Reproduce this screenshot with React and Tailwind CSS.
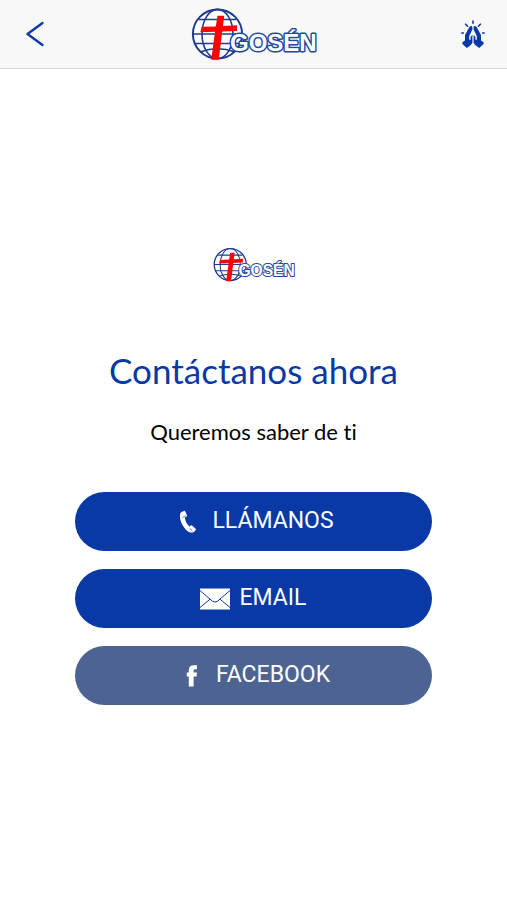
const iconClass = 'h-6 w-[30px] shrink-0';

function Logo({ className }) {
    return (
        <svg viewBox="0 0 126 54" className={className} role="img" aria-label="Gosén">
            <g fill="none" stroke="#1d3c8c" strokeWidth="1.6">
                <circle cx="26.5" cy="27" r="24.6" fill="#fff" strokeWidth="2" />
                <ellipse cx="26.5" cy="27" rx="15.5" ry="24.6" />
                <path d="M8 12.5H45M2 27H51M4 36.5H49M9 45Q26.5 38.5 44 45" />
            </g>
            <path d="M26.5 8.8H33.2L32 19L46 18.2V24L31.2 24.6L27.8 52.8H20.2L24 24.8L9.3 25.3L10.7 19.8L24.8 19.4Z" fill="#fa0505" />
            <text
                x="39"
                y="44"
                fontFamily="Liberation Sans, Arial, sans-serif"
                fontSize="24"
                fontWeight="700"
                fill="#fff"
                stroke="#234799"
                strokeWidth="3"
                strokeLinejoin="round"
                paintOrder="stroke"
            >
                GOSÉN
            </text>
        </svg>
    );
}

function PrayIcon() {
    return (
        <svg viewBox="0 0 26 30" className="h-[30px] w-[26px] shrink-0" aria-hidden="true">
            <path
                d="M13 2V4.2M5.6 5.2L7.6 7.2M20.4 5.2L18.4 7.2M1.8 14H3.4M22.6 14H24.2"
                fill="none"
                stroke="#0839a7"
                strokeWidth="1.6"
                strokeLinecap="round"
            />
            <g fill="#0839a7">
                <path d="M9.4 8Q12 6 12.4 8.4V10.4L9.2 17V20.8H10.6V18L12.4 15.8V24L10.5 26.2L6.8 29L2.4 25V23.2L5 21.5V16Z" />
                <path d="M16.6 8Q14 6 13.6 8.4V10.4L16.8 17V20.8H15.4V18L13.6 15.8V24L15.5 26.2L19.2 29L23.6 25V23.2L21 21.5V16Z" />
            </g>
        </svg>
    );
}

function PhoneIcon() {
    return (
        <svg viewBox="0 0 30 24" className={iconClass} fill="currentColor" aria-hidden="true">
            <path d="M8.4 2.1L11 .9Q12 .7 12.4 1.7L13.9 5.3Q14.2 6.3 13.3 6.8L11.9 7.5C12.1 11 13.8 14.3 16.5 16.4L17.7 15.6Q18.6 15 19.3 15.8L22.6 18.7Q23.3 19.5 22.6 20.2L20.9 22C18.7 23.5 15.1 22.2 12 18.7C8.6 14.8 6.6 9.6 6.9 5.2Q7 3 8.4 2.1Z" />
            <path d="M9.5 7.4L13 5.8M16.5 18.2L19.5 21" stroke="#0839a7" strokeWidth="0.6" />
        </svg>
    );
}

function MailIcon() {
    return (
        <svg viewBox="0 0 30 24" className={iconClass} aria-hidden="true">
            <path d="M0 1.5H30V22.5H0Z" fill="currentColor" />
            <path d="M0 3.5L12.5 14.2Q15 16 17.5 14.2L30 3.5M0 20.5L10 12.2M30 20.5L20 12.2" fill="none" stroke="#0839a7" strokeWidth="1" />
        </svg>
    );
}

function FacebookIcon() {
    return (
        <svg viewBox="0 0 30 24" className={iconClass} fill="currentColor" aria-hidden="true">
            <path d="M11.8 22.6V12.4H9.8V8.6H11.8V6.2C11.8 3 13.6 1.3 16.8 1.3H20V5.2H18.2C17 5.2 16.6 5.7 16.6 6.7V8.6H20L19.5 12.4H16.6V22.6Z" />
        </svg>
    );
}

const actions = [
    { label: 'LLÁMANOS', Icon: PhoneIcon, color: 'bg-[#0839a7]' },
    { label: 'EMAIL', Icon: MailIcon, color: 'bg-[#0839a7]' },
    { label: 'FACEBOOK', Icon: FacebookIcon, color: 'bg-[#4d6492]' },
];

export default function App() {
    return (
        <div className="min-h-screen bg-white">
            <header className="flex items-center justify-between border-b border-[#d9d9d9] bg-[#f8f8f8] px-5 py-[7px]">
                <button type="button" aria-label="Volver" className="flex h-12 w-7 items-center justify-center">
                    <svg viewBox="0 0 20 28" className="h-7 w-5" fill="none" stroke="#0839a7" strokeWidth="2.3" strokeLinecap="round" strokeLinejoin="round" aria-hidden="true">
                        <path d="M18.5 3L3.5 14L18.5 25" />
                    </svg>
                </button>
                <Logo className="w-[126px]" />
                <button type="button" aria-label="Oración" className="flex h-12 w-7 items-center justify-center">
                    <PrayIcon />
                </button>
            </header>

            <main className="flex flex-col items-center px-[75px] pt-[178px] text-center">
                <Logo className="w-[82px]" />
                <h1 className="mt-16 font-['Lato',sans-serif] text-[35px] leading-12 whitespace-nowrap text-[#0839a7]">Contáctanos ahora</h1>
                <p className="mt-6 font-['Lato',sans-serif] text-[22px] leading-7 text-black [font-variant-ligatures:none]">Queremos saber de ti</p>
                <div className="mt-[46px] flex w-full flex-col gap-[18px]">
                    {actions.map(({ label, Icon, color }) => (
                        <button
                            key={label}
                            type="button"
                            className={`flex h-[59px] w-full items-center justify-center gap-[9px] rounded-full font-['Roboto',sans-serif] text-[23px] text-white ${color}`}
                        >
                            <Icon />
                            {label}
                        </button>
                    ))}
                </div>
            </main>
        </div>
    );
}
